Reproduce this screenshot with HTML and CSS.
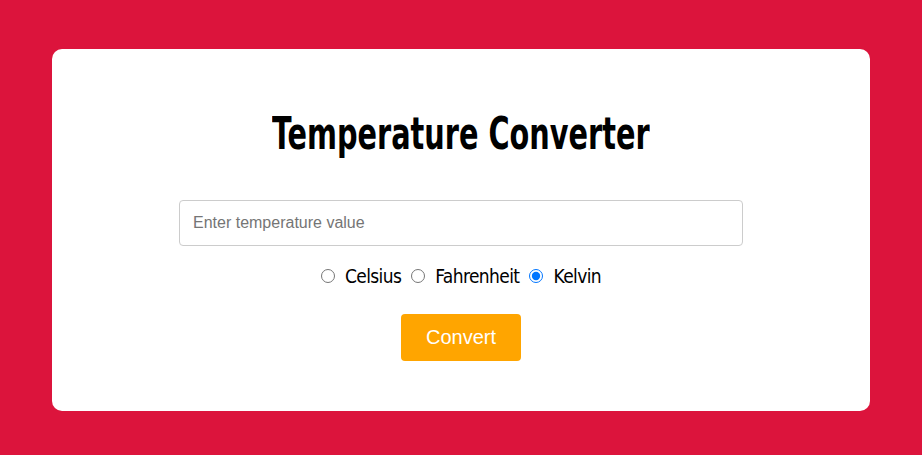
FILE: index.html
```html
<!DOCTYPE html>
<html lang="en">
<head>
<meta charset="utf-8">
<title>Temperature Converter</title>
<link rel="stylesheet" href="styles.css">
</head>
<body>
<main class="page">
  <section class="card">
    <h1 class="title">Temperature Converter</h1>
    <input class="temp-input" type="text" placeholder="Enter temperature value">
    <div class="units">
      <label class="unit"><input type="radio" name="unit" value="c"><span>Celsius</span></label>
      <label class="unit"><input type="radio" name="unit" value="f"><span>Fahrenheit</span></label>
      <label class="unit"><input type="radio" name="unit" value="k" checked><span>Kelvin</span></label>
    </div>
    <button class="convert" type="button">Convert</button>
  </section>
</main>
</body>
</html>
```
FILE: styles.css
```css
html, body {
  margin: 0;
  padding: 0;
}
body {
  background: #dc143c;
  font-family: "DejaVu Sans", sans-serif;
  font-stretch: condensed;
}
.page {
  display: flex;
  justify-content: center;
  padding-top: 49px;
}
.card {
  width: 818px;
  height: 362px;
  box-sizing: border-box;
  background: #fff;
  border-radius: 10px;
  display: flex;
  flex-direction: column;
  align-items: center;
  padding-top: 57px;
}
.title {
  margin: 0;
  font-size: 45px;
  font-weight: bold;
  line-height: 56px;
  color: #000;
  transform: scaleX(0.71);
}
.temp-input {
  margin-top: 38px;
  width: 564px;
  height: 46px;
  box-sizing: border-box;
  border: 1px solid #ccc;
  border-radius: 4px;
  padding: 0 13px;
  font-family: "Liberation Sans", Arial, sans-serif;
  font-size: 16px;
  color: #333;
}
.temp-input::placeholder {
  color: #757575;
}
.units {
  margin-top: 18px;
  display: flex;
  gap: 10px;
  font-size: 19px;
  line-height: 24px;
  letter-spacing: -0.6px;
}
.unit {
  display: flex;
  align-items: center;
  gap: 10px;
}
.unit input {
  margin: 0;
  width: 14px;
  height: 14px;
}
.convert {
  margin-top: 26px;
  width: 120px;
  height: 47px;
  border: none;
  border-radius: 4px;
  background: #ffa500;
  color: #fff;
  font-family: "Liberation Sans", Arial, sans-serif;
  font-size: 20px;
}
```
